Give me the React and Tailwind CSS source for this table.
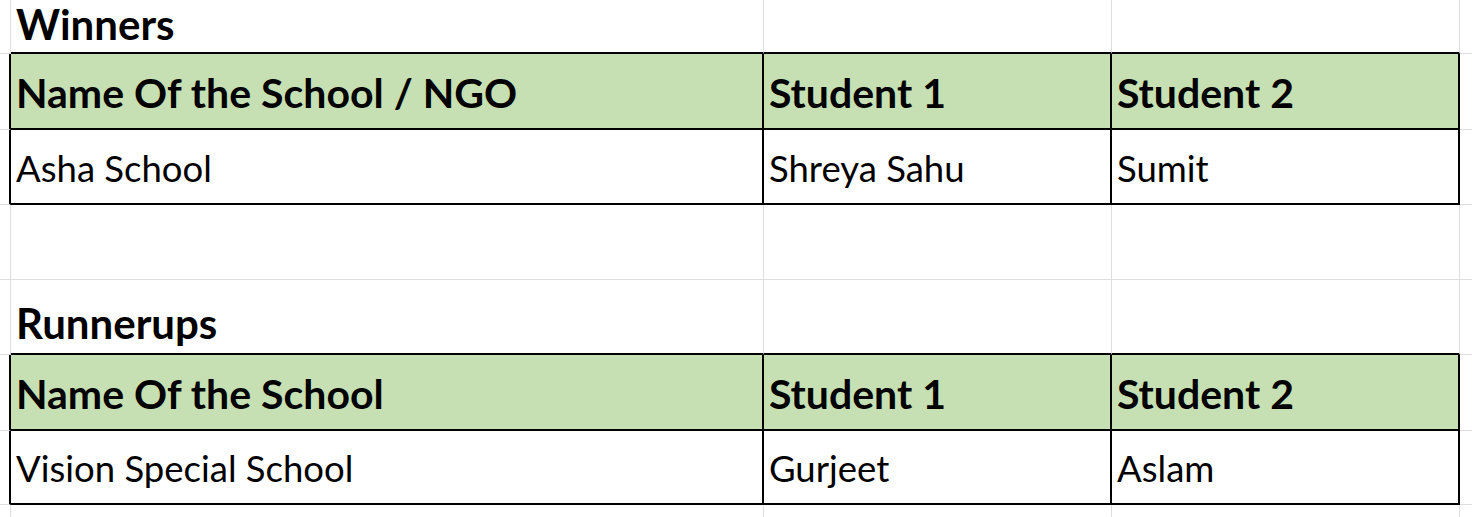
import React from 'react';

const grid = 'border-[#dedede]';

// widths of the sheet columns (each includes its own right gridline)
const cols = ['w-[11px]', 'w-[753px]', 'w-[348px]', 'w-[348px]'];

function Cell({ w, className = '', children }) {
  return (
    <div className={`${w} shrink-0 h-full flex items-center pl-[5px] pt-[3px] overflow-visible whitespace-nowrap ${className}`}>
      {children}
    </div>
  );
}

function TitleRow({ title, h, pb }) {
  return (
    <div className={`flex ${h}`}>
      <div className={`${cols[0]} shrink-0 border-r border-b ${grid}`} />
      <div className={`${cols[1]} shrink-0 flex items-end pl-[5px] ${pb} border-r border-b-2 border-r-[#dedede] border-b-black`}>
        <span className="text-[42px] font-bold leading-none">{title}</span>
      </div>
      <div className={`${cols[2]} shrink-0 border-r border-b-2 border-r-[#dedede] border-b-black`} />
      <div className={`${cols[3]} shrink-0 border-r border-b-2 border-r-[#dedede] border-b-black`} />
      <div className={`flex-1 border-b ${grid}`} />
    </div>
  );
}

function HeaderRow({ cells, h }) {
  return (
    <div className={`flex ${h}`}>
      <div className={`${cols[0]} shrink-0 border-r-2 border-b border-r-black border-b-[#dedede]`} />
      {cells.map((c, i) => (
        <Cell key={i} w={cols[i + 1]} className="bg-[#c6e0b4] border-r-2 border-b-2 border-black">
          <span className="text-[41px] font-bold leading-none">{c}</span>
        </Cell>
      ))}
      <div className={`flex-1 border-b ${grid}`} />
    </div>
  );
}

function DataRow({ cells, h }) {
  return (
    <div className={`flex ${h}`}>
      <div className={`${cols[0]} shrink-0 border-r-2 border-b border-r-black border-b-[#dedede]`} />
      {cells.map((c, i) => (
        <Cell key={i} w={cols[i + 1]} className="bg-white border-r-2 border-b-2 border-black">
          <span className="text-[36.5px] leading-none">{c}</span>
        </Cell>
      ))}
      <div className={`flex-1 border-b ${grid}`} />
    </div>
  );
}

function EmptyRow({ h }) {
  return (
    <div className={`flex ${h}`}>
      {cols.map((w, i) => (
        <div key={i} className={`${w} shrink-0 border-r border-b ${grid}`} />
      ))}
      <div className={`flex-1 border-b ${grid}`} />
    </div>
  );
}

export default function App() {
  return (
    <div
      className="w-[1472px] h-[517px] overflow-hidden bg-white text-black flex flex-col"
      style={{ fontFamily: 'Lato, "Open Sans", sans-serif' }}
    >
      <TitleRow title="Winners" h="h-[54px]" pb="pb-[7px]" />
      <HeaderRow h="h-[76px]" cells={['Name Of the School / NGO', 'Student 1', 'Student 2']} />
      <DataRow h="h-[75px]" cells={['Asha School', 'Shreya Sahu', 'Sumit']} />
      <EmptyRow h="h-[75px]" />
      <TitleRow title="Runnerups" h="h-[75px]" pb="pb-[9px]" />
      <HeaderRow h="h-[76px]" cells={['Name Of the School', 'Student 1', 'Student 2']} />
      <DataRow h="h-[74px]" cells={['Vision Special School', 'Gurjeet', 'Aslam']} />
      <div className="flex flex-1">
        {cols.map((w, i) => (
          <div key={i} className={`${w} shrink-0 border-r ${grid}`} />
        ))}
      </div>
    </div>
  );
}
